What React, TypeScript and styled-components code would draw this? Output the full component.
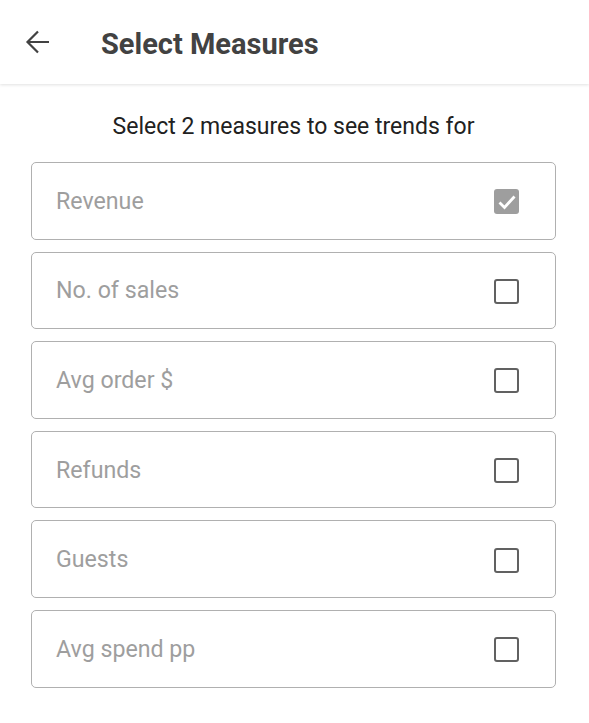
import styled, { createGlobalStyle } from 'styled-components';

const GlobalStyle = createGlobalStyle`
  body {
    margin: 0;
    background: #fff;
    font-family: Roboto, "Liberation Sans", sans-serif;
  }
`;

const Page = styled.div`
  width: 589px;
  min-height: 723px;
  background: #fff;
`;

const Header = styled.header`
  height: 84px;
  display: flex;
  align-items: center;
  padding: 0 0 0 25px;
  box-shadow: 0 1px 3px rgba(0, 0, 0, 0.12);
  box-sizing: border-box;
`;

const BackButton = styled.button`
  border: none;
  background: none;
  padding: 0;
  width: 25px;
  height: 26px;
  display: flex;
  align-items: center;
  justify-content: center;
  color: #424242;
  cursor: pointer;
`;

const Title = styled.h1`
  margin: 0 0 0 51px;
  font-size: 29px;
  font-weight: 700;
  color: #424242;
  position: relative;
  top: 2px;
`;

const Content = styled.main`
  padding: 29px 33px 0 31px;
`;

const Hint = styled.p`
  margin: 0 0 22px;
  text-align: center;
  font-size: 23px;
  color: #212121;
  line-height: 27px;
`;

const List = styled.div`
  display: flex;
  flex-direction: column;
  gap: 12px;
`;

const Option = styled.label`
  height: 77.6px;
  box-sizing: border-box;
  border: 1.5px solid #b0b0b0;
  border-radius: 5px;
  display: flex;
  align-items: center;
  justify-content: space-between;
  padding: 0 36px 0 24px;
  cursor: pointer;
`;

const Label = styled.span`
  font-size: 23.2px;
  color: #9e9e9e;
`;

const Box = styled.span<{ $checked?: boolean }>`
  width: 25px;
  height: 25px;
  box-sizing: border-box;
  border-radius: 3px;
  display: flex;
  align-items: center;
  justify-content: center;
  background: ${(p) => (p.$checked ? '#9e9e9e' : 'transparent')};
  border: ${(p) => (p.$checked ? 'none' : '2.5px solid #616161')};
  margin-top: 2px;
`;

const measures = [
  { name: 'Revenue', checked: true },
  { name: 'No. of sales', checked: false },
  { name: 'Avg order $', checked: false },
  { name: 'Refunds', checked: false },
  { name: 'Guests', checked: false },
  { name: 'Avg spend pp', checked: false },
];

const App = () => {
  return (
    <Page>
      <GlobalStyle />
      <Header>
        <BackButton aria-label="Back">
          <svg width="25" height="26" viewBox="0 0 25 26" fill="none" stroke="currentColor" strokeWidth="2.2">
            <path d="M24 13H2.5M13 2.5L2.5 13L13 23.5" />
          </svg>
        </BackButton>
        <Title>Select Measures</Title>
      </Header>
      <Content>
        <Hint>Select 2 measures to see trends for</Hint>
        <List>
          {measures.map((m) => (
            <Option key={m.name}>
              <Label>{m.name}</Label>
              <Box $checked={m.checked}>
                {m.checked && (
                  <svg width="22" height="22" viewBox="0 0 22 22" fill="none" stroke="#fff" strokeWidth="2.8">
                    <path d="M3.5 11.5L8.5 16.5L18.5 5.5" />
                  </svg>
                )}
              </Box>
            </Option>
          ))}
        </List>
      </Content>
    </Page>
  );
};

export default App;
